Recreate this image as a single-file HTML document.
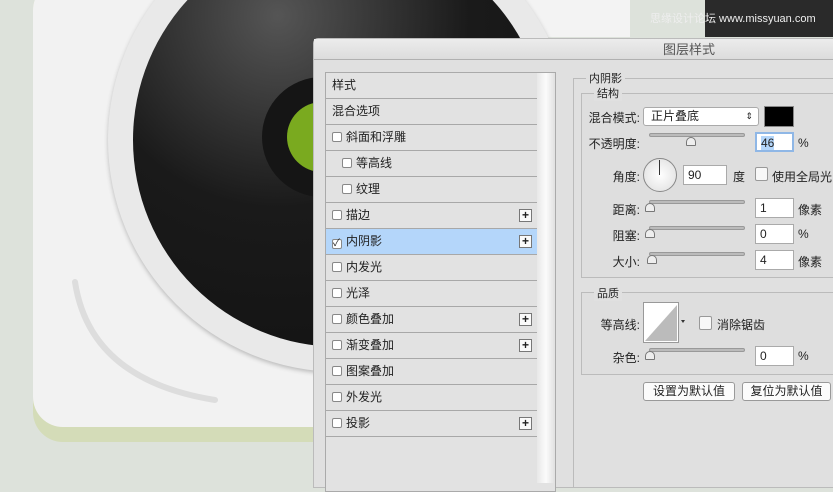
<!DOCTYPE html><html><head><meta charset="utf-8"><style>
*{box-sizing:border-box;margin:0;padding:0}
body{width:833px;height:482px;overflow:hidden;background:#dde2db;position:relative;font-family:"Liberation Sans","Noto Sans CJK SC",sans-serif;font-size:12px;color:#222}
.a{position:absolute}
.row{position:absolute;left:326px;width:211px;height:26px;border-bottom:1px solid #a8a8a8;background:#e2e2e2;line-height:25px;padding-left:6px}
.cb{display:inline-block;width:10px;height:10px;border:1px solid #888;background:#fff;border-radius:2px;vertical-align:-1px;margin-right:4px}
.plus{position:absolute;right:5px;top:6px;width:13px;height:13px;border:1px solid #777;background:#fafafa;font-size:12px;line-height:10px;text-align:center;font-weight:bold}
.lbl{position:absolute;text-align:right;width:70px}
.sl{position:absolute;height:4px;width:96px;border-radius:2px;background:#bbb;border:1px solid #999}
.th{position:absolute;width:10px;height:9px;border:1px solid #777;background:#eee;border-radius:5px 5px 1px 1px}
.in{position:absolute;height:20px;background:#fff;border:1px solid #aaa;padding-left:4px;line-height:18px}
.btn{position:absolute;height:19px;background:#fbfbfb;border:1px solid #999;border-radius:3px;text-align:center;line-height:17px}
</style></head><body>
<div class="a" style="left:490px;top:0;width:140px;height:37px;background:#f3f3f3"></div>
<div class="a" style="left:705px;top:0;width:128px;height:37px;background:#2a2a2a"></div>
<div class="a" style="left:650px;top:10px;color:#eee;font-size:11px">思缘设计论坛 www.missyuan.com</div>
<div class="a" style="left:33px;top:-20px;width:320px;height:462px;border-radius:30px;background:#d4dcb8"></div>
<div class="a" style="left:33px;top:-20px;width:320px;height:447px;border-radius:30px;background:#f2f2f2"></div>
<div class="a" style="left:473px;top:0;width:22px;height:40px;background:#e4e4e4;border-left:1px solid #ccc"></div>
<div class="a" style="left:108px;top:-92px;width:464px;height:464px;border-radius:50%;background:#e9e9e9;box-shadow:0 2px 4px #bbb"></div>
<div class="a" style="left:133px;top:-67px;width:414px;height:414px;border-radius:50%;background:radial-gradient(circle at 35% 20%,#555,#1a1a1a 45%,#111)"></div>
<div class="a" style="left:262px;top:77px;width:120px;height:120px;border-radius:50%;background:#151515"></div>
<div class="a" style="left:287px;top:102px;width:70px;height:70px;border-radius:50%;background:#7aaa1f"></div>
<svg class="a" style="left:60px;top:270px" width="170" height="140"><path d="M15 12 Q30 110 155 130" stroke="#ddd" stroke-width="6" fill="none" stroke-linecap="round"/></svg>
<div class="a" style="left:313px;top:38px;width:530px;height:450px;background:#e0e0e0;border-radius:5px 0 0 0;border:1px solid #bbb"></div>
<div class="a" style="left:314px;top:39px;width:520px;height:21px;background:linear-gradient(#ececec,#dcdcdc);border-bottom:1px solid #b0b0b0;text-align:center;line-height:21px;color:#555;font-size:13px;padding-left:230px">图层样式</div>
<div class="a" style="left:325px;top:72px;width:231px;height:420px;border:1px solid #aaa;background:#e2e2e2"></div>
<div class="a" style="left:537px;top:73px;width:18px;height:410px;background:linear-gradient(90deg,#e8e8e8,#fbfbfb,#e0e0e0)"></div>
<div class="row" style="top:73px">样式</div>
<div class="row" style="top:99px">混合选项</div>
<div class="row" style="top:125px"><span class="cb"></span>斜面和浮雕</div>
<div class="row" style="top:151px;padding-left:16px"><span class="cb"></span>等高线</div>
<div class="row" style="top:177px;padding-left:16px"><span class="cb"></span>纹理</div>
<div class="row" style="top:203px"><span class="cb"></span>描边<span class="plus">+</span></div>
<div class="row" style="top:229px;background:#b4d6fa"><span class="cb" style="font-size:10px;line-height:8px">✓</span>内阴影<span class="plus">+</span></div>
<div class="row" style="top:255px"><span class="cb"></span>内发光</div>
<div class="row" style="top:281px"><span class="cb"></span>光泽</div>
<div class="row" style="top:307px"><span class="cb"></span>颜色叠加<span class="plus">+</span></div>
<div class="row" style="top:333px"><span class="cb"></span>渐变叠加<span class="plus">+</span></div>
<div class="row" style="top:359px"><span class="cb"></span>图案叠加</div>
<div class="row" style="top:385px"><span class="cb"></span>外发光</div>
<div class="row" style="top:411px"><span class="cb"></span>投影<span class="plus">+</span></div>
<div class="a" style="left:573px;top:78px;width:270px;height:410px;border:1px solid #bbb;border-right:none"></div>
<div class="a" style="left:586px;top:70px;background:#e0e0e0;padding:0 3px;font-size:11px">内阴影</div>
<div class="a" style="left:581px;top:93px;width:260px;height:185px;border:1px solid #bbb;background:#dedede"></div>
<div class="a" style="left:594px;top:85px;background:#e0e0e0;padding:0 3px;font-size:11px">结构</div>
<div class="lbl" style="left:570px;top:109px">混合模式:</div>
<div class="a" style="left:643px;top:107px;width:116px;height:19px;background:#fff;border:1px solid #aaa;border-radius:3px;padding-left:7px;line-height:17px">正片叠底<span style="position:absolute;right:5px;font-size:9px">⇕</span></div>
<div class="a" style="left:764px;top:106px;width:30px;height:21px;background:#000;border:1px solid #888"></div>
<div class="lbl" style="left:570px;top:135px">不透明度:</div>
<div class="sl" style="left:649px;top:133px"></div><div class="th" style="left:686px;top:137px"></div>
<div class="in" style="left:755px;top:132px;width:39px;border:2px solid #8fb7e6"><span style="background:#b4d6fa">46</span></div>
<div class="a" style="left:798px;top:136px">%</div>
<div class="lbl" style="left:570px;top:168px">角度:</div>
<div class="a" style="left:643px;top:158px;width:34px;height:34px;border-radius:50%;border:1px solid #888;background:radial-gradient(#fff,#ddd)"></div>
<div class="a" style="left:659px;top:160px;width:1px;height:15px;background:#333"></div>
<div class="in" style="left:683px;top:165px;width:44px">90</div>
<div class="a" style="left:733px;top:168px">度</div>
<div class="a" style="left:755px;top:167px;width:13px;height:14px;border:1px solid #999;background:#f8f8f8;border-radius:2px"></div>
<div class="a" style="left:772px;top:168px">使用全局光</div>
<div class="lbl" style="left:570px;top:201px">距离:</div>
<div class="sl" style="left:649px;top:200px"></div><div class="th" style="left:645px;top:203px"></div>
<div class="in" style="left:755px;top:198px;width:39px">1</div><div class="a" style="left:798px;top:201px">像素</div>
<div class="lbl" style="left:570px;top:227px">阻塞:</div>
<div class="sl" style="left:649px;top:226px"></div><div class="th" style="left:645px;top:229px"></div>
<div class="in" style="left:755px;top:224px;width:39px">0</div><div class="a" style="left:798px;top:227px">%</div>
<div class="lbl" style="left:570px;top:253px">大小:</div>
<div class="sl" style="left:649px;top:252px"></div><div class="th" style="left:647px;top:255px"></div>
<div class="in" style="left:755px;top:250px;width:39px">4</div><div class="a" style="left:798px;top:253px">像素</div>
<div class="a" style="left:581px;top:292px;width:260px;height:83px;border:1px solid #bbb;background:#dedede"></div>
<div class="a" style="left:594px;top:285px;background:#e0e0e0;padding:0 3px;font-size:11px">品质</div>
<div class="lbl" style="left:570px;top:316px">等高线:</div>
<svg class="a" style="left:643px;top:302px" width="43" height="42"><rect x="0.5" y="0.5" width="35" height="40" fill="#fff" stroke="#999"/><path d="M2 39 L34 3 L34 39Z" fill="#bbb"/><path d="M38 18 l4 0 l-2 3z" fill="#333"/></svg>
<div class="a" style="left:699px;top:316px;width:13px;height:14px;border:1px solid #999;background:#f8f8f8;border-radius:2px"></div>
<div class="a" style="left:717px;top:316px">消除锯齿</div>
<div class="lbl" style="left:570px;top:349px">杂色:</div>
<div class="sl" style="left:649px;top:348px"></div><div class="th" style="left:645px;top:351px"></div>
<div class="in" style="left:755px;top:346px;width:39px">0</div><div class="a" style="left:798px;top:349px">%</div>
<div class="btn" style="left:643px;top:382px;width:92px">设置为默认值</div>
<div class="btn" style="left:742px;top:382px;width:89px">复位为默认值</div>
</body></html>
